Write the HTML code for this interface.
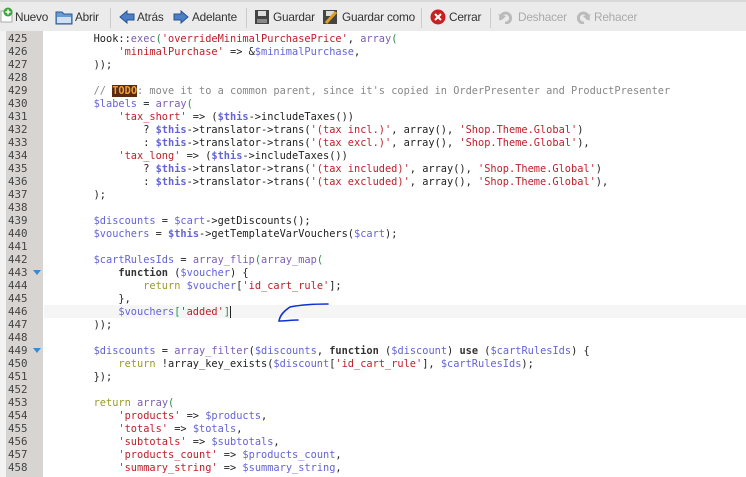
<!DOCTYPE html>
<html><head><style>
body{margin:0;width:746px;height:477px;overflow:hidden;background:#fff;font-family:"Liberation Sans","DejaVu Sans",sans-serif;position:relative}
#tb{position:absolute;left:0;top:0;width:746px;height:31px;background:#ebebeb;border-top:2px solid #d8d8d8;box-sizing:border-box}
.b{position:absolute;top:8px;font-size:11.8px;color:#333;font-family:"Liberation Sans",sans-serif;letter-spacing:-0.2px;white-space:nowrap}
.d{color:#aaa}
.sep{position:absolute;top:6px;width:1px;height:20px;background:#ccc}
.ic{position:absolute}
#strip{position:absolute;left:0;top:31px;width:6px;height:446px;background:#f3f3f3}
#gut{position:absolute;left:6px;top:31px;width:37px;height:446px;background:#d7d4d2}
#code{position:absolute;left:8px;top:32px;font-family:"DejaVu Sans Mono",monospace;font-size:10.3px;line-height:13px;color:#222}
.l{height:13px;position:relative;white-space:pre}
.n{display:inline-block;width:36px;color:#444;font-size:10.8px}
.s{color:#bf1f2a}.v{color:#6464d6}.t{color:#6464d6;font-weight:bold}.k{color:#333;font-weight:bold}.g{color:#2a8a4a}.r{color:#9a9a2a}.c{color:#888}.p{color:#7b5fb0}
.todo{background:#5a2a10;color:#f0a030;font-weight:bold}
.cur{position:absolute;top:0;height:13px;background:#f5f5f5}
.tri{position:absolute;left:25px;top:4px;width:0;height:0;border-left:4px solid transparent;border-right:4px solid transparent;border-top:5px solid #3a8ad0}
</style></head><body>
<div id="tb">
<svg class="ic" style="left:0;top:5px" width="14" height="16"><rect x="1" y="4" width="11" height="11" fill="#fff" stroke="#aaa"/><circle cx="8" cy="5" r="4.5" fill="#3aa53a"/><path d="M8 2.5v5M5.5 5h5" stroke="#fff" stroke-width="1.5"/></svg>
<span class="b" style="left:15px">Nuevo</span>
<svg class="ic" style="left:55px;top:7px" width="18" height="16"><path d="M1 3h6l2 2h8v10H1z" fill="#6a9ad0" stroke="#2a5a9a"/><rect x="2" y="8" width="14" height="6" fill="#cfe0f5"/></svg>
<span class="b" style="left:75px">Abrir</span>
<div class="sep" style="left:110px"></div>
<svg class="ic" style="left:119px;top:8px" width="16" height="14"><path d="M1 7l7-6v3h7v6H8v3z" fill="#4a80c8" stroke="#2a5090"/></svg>
<span class="b" style="left:137px">Atrás</span>
<svg class="ic" style="left:173px;top:8px" width="16" height="14"><path d="M15 7L8 1v3H1v6h7v3z" fill="#4a80c8" stroke="#2a5090"/></svg>
<span class="b" style="left:192px">Adelante</span>
<div class="sep" style="left:246px"></div>
<svg class="ic" style="left:254px;top:7px" width="16" height="16"><rect x="1" y="1" width="14" height="14" fill="#444"/><rect x="4" y="2" width="8" height="5" fill="#ddd"/><rect x="3" y="10" width="10" height="4" fill="#888"/></svg>
<span class="b" style="left:273px">Guardar</span>
<svg class="ic" style="left:322px;top:7px" width="16" height="16"><rect x="1" y="1" width="14" height="14" fill="#444"/><rect x="4" y="2" width="8" height="5" fill="#ddd"/><path d="M4 14L14 3" stroke="#e0a020" stroke-width="3"/></svg>
<span class="b" style="left:342px">Guardar como</span>
<div class="sep" style="left:421px"></div>
<svg class="ic" style="left:430px;top:7px" width="16" height="16"><circle cx="8" cy="8" r="7.5" fill="#c82020"/><path d="M5 5l6 6M11 5l-6 6" stroke="#fff" stroke-width="2"/></svg>
<span class="b" style="left:449px">Cerrar</span>
<div class="sep" style="left:490px"></div>
<svg class="ic" style="left:498px;top:8px" width="16" height="14"><path d="M3 10a5 5 0 1 1 4 3" fill="none" stroke="#bbb" stroke-width="3"/><path d="M0 4l4 6 4-4z" fill="#bbb"/></svg>
<span class="b d" style="left:518px">Deshacer</span>
<svg class="ic" style="left:575px;top:8px" width="16" height="14"><path d="M13 10a5 5 0 1 0-4 3" fill="none" stroke="#bbb" stroke-width="3"/><path d="M16 4l-4 6-4-4z" fill="#bbb"/></svg>
<span class="b d" style="left:594px">Rehacer</span>
</div>
<div id="strip"></div>
<div id="gut"></div>
<div id="code"><div class="l"><span class="n">425</span>        Hook::<span class="p">exec</span><span class="g">(</span><span class="s">'overrideMinimalPurchasePrice'</span>, <span class="p">array</span><span class="g">(</span></div><div class="l"><span class="n">426</span>            <span class="s">'minimalPurchase'</span> =&gt; &amp;<span class="v">$minimalPurchase</span>,</div><div class="l"><span class="n">427</span>        ));</div><div class="l"><span class="n">428</span></div><div class="l"><span class="n">429</span>        <span class="c">// <span class="todo">TODO</span>: move it to a common parent, since it's copied in OrderPresenter and ProductPresenter</span></div><div class="l"><span class="n">430</span>        <span class="v">$labels</span> = <span class="p">array</span><span class="g">(</span></div><div class="l"><span class="n">431</span>            <span class="s">'tax_short'</span> =&gt; (<span class="t">$this</span>-&gt;includeTaxes())</div><div class="l"><span class="n">432</span>                ? <span class="t">$this</span>-&gt;translator-&gt;trans(<span class="s">'(tax incl.)'</span>, array(), <span class="s">'Shop.Theme.Global'</span>)</div><div class="l"><span class="n">433</span>                : <span class="t">$this</span>-&gt;translator-&gt;trans(<span class="s">'(tax excl.)'</span>, array(), <span class="s">'Shop.Theme.Global'</span>),</div><div class="l"><span class="n">434</span>            <span class="s">'tax_long'</span> =&gt; (<span class="t">$this</span>-&gt;includeTaxes())</div><div class="l"><span class="n">435</span>                ? <span class="t">$this</span>-&gt;translator-&gt;trans(<span class="s">'(tax included)'</span>, array(), <span class="s">'Shop.Theme.Global'</span>)</div><div class="l"><span class="n">436</span>                : <span class="t">$this</span>-&gt;translator-&gt;trans(<span class="s">'(tax excluded)'</span>, array(), <span class="s">'Shop.Theme.Global'</span>),</div><div class="l"><span class="n">437</span>        );</div><div class="l"><span class="n">438</span></div><div class="l"><span class="n">439</span>        <span class="v">$discounts</span> = <span class="v">$cart</span>-&gt;getDiscounts();</div><div class="l"><span class="n">440</span>        <span class="v">$vouchers</span> = <span class="t">$this</span>-&gt;getTemplateVarVouchers(<span class="v">$cart</span>);</div><div class="l"><span class="n">441</span></div><div class="l"><span class="n">442</span>        <span class="v">$cartRulesIds</span> = <span class="p">array_flip</span><span class="g">(</span><span class="p">array_map</span><span class="g">(</span></div><div class="l"><span class="tri"></span><span class="n">443</span>            <span class="k">function</span> (<span class="v">$voucher</span>) {</div><div class="l"><span class="n">444</span>                <span class="r">return</span> <span class="v">$voucher</span>[<span class="s">'id_cart_rule'</span>];</div><div class="l"><span class="n">445</span>            },</div><div class="l"><div class="cur" style="left:36px;width:710px"></div><span class="n" style="position:relative">446</span><span style="position:relative">            <span class="v">$vouchers</span><span class="g">[</span><span class="s">'added'</span><span class="g">]</span><span style="border-left:1.5px solid #222"></span></span></div><div class="l"><span class="n">447</span>        ));</div><div class="l"><span class="n">448</span></div><div class="l"><span class="tri"></span><span class="n">449</span>        <span class="v">$discounts</span> = <span class="p">array_filter</span>(<span class="v">$discounts</span>, <span class="k">function</span> (<span class="v">$discount</span>) <span class="k">use</span> (<span class="v">$cartRulesIds</span>) {</div><div class="l"><span class="n">450</span>            <span class="r">return</span> !array_key_exists(<span class="v">$discount</span>[<span class="s">'id_cart_rule'</span>], <span class="v">$cartRulesIds</span>);</div><div class="l"><span class="n">451</span>        });</div><div class="l"><span class="n">452</span></div><div class="l"><span class="n">453</span>        <span class="r">return</span> <span class="p">array</span><span class="g">(</span></div><div class="l"><span class="n">454</span>            <span class="s">'products'</span> =&gt; <span class="v">$products</span>,</div><div class="l"><span class="n">455</span>            <span class="s">'totals'</span> =&gt; <span class="v">$totals</span>,</div><div class="l"><span class="n">456</span>            <span class="s">'subtotals'</span> =&gt; <span class="v">$subtotals</span>,</div><div class="l"><span class="n">457</span>            <span class="s">'products_count'</span> =&gt; <span class="v">$products_count</span>,</div><div class="l"><span class="n">458</span>            <span class="s">'summary_string'</span> =&gt; <span class="v">$summary_string</span>,</div></div>
<svg style="position:absolute;left:270px;top:301px" width="65" height="25"><path d="M20 6C30 4 45 3 58 3M20 6C14 10 10 14 9 20C15 20 22 19 28 19" fill="none" stroke="#1030d0" stroke-width="1.6" stroke-linecap="round"/></svg>
</body></html>
